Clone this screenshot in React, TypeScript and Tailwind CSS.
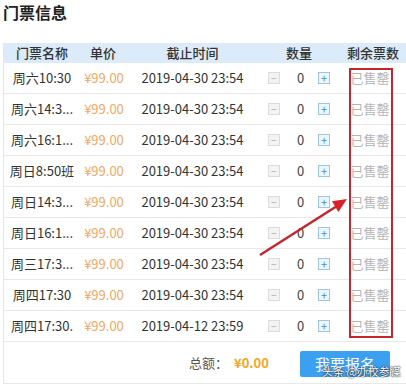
import React from 'react'

// ── Data ──────────────────────────────────────────────────────────────────────

interface Ticket {
  name: string
  price: string
  deadline: string
}

const tickets: Ticket[] = [
  { name: '周六10:30', price: '¥99.00', deadline: '2019-04-30 23:54' },
  { name: '周六14:3...', price: '¥99.00', deadline: '2019-04-30 23:54' },
  { name: '周六16:1...', price: '¥99.00', deadline: '2019-04-30 23:54' },
  { name: '周日8:50班', price: '¥99.00', deadline: '2019-04-30 23:54' },
  { name: '周日14:3...', price: '¥99.00', deadline: '2019-04-30 23:54' },
  { name: '周日16:1...', price: '¥99.00', deadline: '2019-04-30 23:54' },
  { name: '周三17:3...', price: '¥99.00', deadline: '2019-04-30 23:54' },
  { name: '周四17:30', price: '¥99.00', deadline: '2019-04-30 23:54' },
  { name: '周四17:30.', price: '¥99.00', deadline: '2019-04-12 23:59' },
]

const grid = 'grid grid-cols-[76px_46px_133px_80px_68px]'

// ── Component ─────────────────────────────────────────────────────────────────

export default function App() {
  return (
    <div
      className="relative w-[406px] h-[387px] overflow-hidden bg-white text-[#333]"
      style={{ fontFamily: '"Noto Sans CJK SC", "Noto Sans", sans-serif' }}
    >
      {/* Title */}
      <h2 className="pl-[3px] h-[24px] leading-[24px] text-[16px] font-bold text-[#222]">门票信息</h2>

      <div className="mt-[19px] ml-[3px] w-[410px] border-l border-[#e6e6e6]">
        {/* Header */}
        <div className={`${grid} h-[20px] bg-[#dbebf9] text-[13px] leading-[20px] font-medium text-[#333] text-center`}>
          <div>门票名称</div>
          <div>单价</div>
          <div>截止时间</div>
          <div>数量</div>
          <div>剩余票数</div>
        </div>

        {/* Rows */}
        {tickets.map((t, i) => (
          <div
            key={i}
            className={`${grid} h-[31px] items-center border-b border-[#e8e8e8] text-[13px] leading-[18px] text-center`}
          >
            <div className="text-[#333] whitespace-nowrap">{t.name}</div>
            <div className="text-[#f2a764] pl-[2px] whitespace-nowrap">{t.price}</div>
            <div className="text-[#333] whitespace-nowrap">{t.deadline}</div>
            <div className="flex items-center justify-center">
              <span className="w-[12px] h-[12px] flex items-center justify-center border border-[#dcdcdc] bg-[#f3f3f3] text-[#aaa] text-[10px] leading-none">−</span>
              <span className="ml-[17px] mr-[14px] text-[#444]">0</span>
              <span className="w-[12px] h-[12px] flex items-center justify-center border border-[#9cc7e4] bg-[#eef6fc] text-[#3c8fcf] text-[11px] leading-none">+</span>
            </div>
            <div className="text-[#b5b5b5] pr-[6px]">已售罄</div>
          </div>
        ))}

        {/* Footer */}
        <div className="h-[42px] flex items-center border-b border-[#e8e8e8] pl-[185px]">
          <span className="text-[13px] text-[#555]">总额：</span>
          <span className="ml-[6px] text-[13px] font-bold text-[#f5a623]">¥0.00</span>
          <button className="ml-[31px] w-[90px] h-[26px] mt-[2px] rounded-[2px] bg-[#3ba0f0] text-white text-[15px] leading-[26px]">
            我要报名
          </button>
        </div>
      </div>

      {/* Annotation: red box */}
      <div className="absolute left-[349px] top-[68px] w-[44px] h-[270px] border-2 border-[#c4262e]" />

      {/* Annotation: arrow */}
      <svg className="absolute left-0 top-0" width="406" height="387">
        <line x1="260" y1="255" x2="337" y2="206" stroke="#c4262e" strokeWidth="2.5" />
        <polygon points="347,199 338.4,212 332,201.3" fill="#d8232a" />
      </svg>

      {/* Watermark */}
      <div
        className="absolute left-[322px] top-[363px] text-[11px] leading-[16px] text-white whitespace-nowrap"
        style={{ textShadow: '0 0 2px rgba(0,0,0,0.8), 0 0 1px rgba(0,0,0,0.9)' }}
      >
        头条 @办校参谋
      </div>
    </div>
  )
}
